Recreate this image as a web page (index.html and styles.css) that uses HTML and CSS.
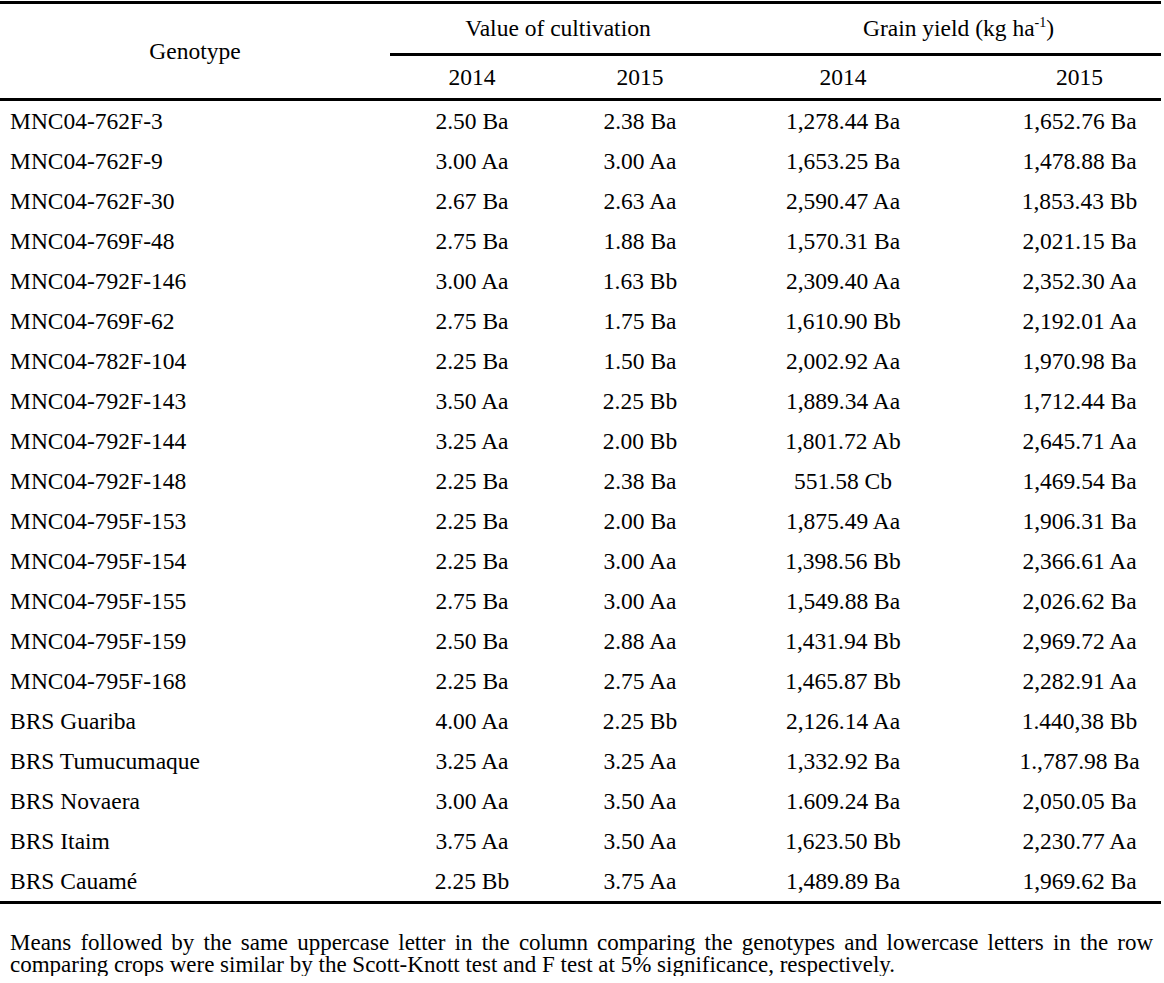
FILE: index.html
```html
<!DOCTYPE html>
<html lang="en">
<head>
<meta charset="utf-8">
<title>Table</title>
<link rel="stylesheet" href="styles.css">
</head>
<body>
<div class="page">
<table class="data">
  <colgroup>
    <col class="c-geno">
    <col class="c-v1">
    <col class="c-v2">
    <col class="c-g1">
    <col class="c-g2">
  </colgroup>
  <thead>
    <tr class="group-row">
      <th rowspan="2" class="geno-head">Genotype</th>
      <th colspan="2" class="group">Value of cultivation</th>
      <th colspan="2" class="group group-grain">Grain yield (kg ha<sup>-1</sup>)</th>
    </tr>
    <tr class="year-row">
      <th>2014</th>
      <th>2015</th>
      <th>2014</th>
      <th class="last">2015</th>
    </tr>
  </thead>
  <tbody>
    <tr><td class="name">MNC04-762F-3</td><td>2.50 Ba</td><td>2.38 Ba</td><td>1,278.44 Ba</td><td class="last">1,652.76 Ba</td></tr>
    <tr><td class="name">MNC04-762F-9</td><td>3.00 Aa</td><td>3.00 Aa</td><td>1,653.25 Ba</td><td class="last">1,478.88 Ba</td></tr>
    <tr><td class="name">MNC04-762F-30</td><td>2.67 Ba</td><td>2.63 Aa</td><td>2,590.47 Aa</td><td class="last">1,853.43 Bb</td></tr>
    <tr><td class="name">MNC04-769F-48</td><td>2.75 Ba</td><td>1.88 Ba</td><td>1,570.31 Ba</td><td class="last">2,021.15 Ba</td></tr>
    <tr><td class="name">MNC04-792F-146</td><td>3.00 Aa</td><td>1.63 Bb</td><td>2,309.40 Aa</td><td class="last">2,352.30 Aa</td></tr>
    <tr><td class="name">MNC04-769F-62</td><td>2.75 Ba</td><td>1.75 Ba</td><td>1,610.90 Bb</td><td class="last">2,192.01 Aa</td></tr>
    <tr><td class="name">MNC04-782F-104</td><td>2.25 Ba</td><td>1.50 Ba</td><td>2,002.92 Aa</td><td class="last">1,970.98 Ba</td></tr>
    <tr><td class="name">MNC04-792F-143</td><td>3.50 Aa</td><td>2.25 Bb</td><td>1,889.34 Aa</td><td class="last">1,712.44 Ba</td></tr>
    <tr><td class="name">MNC04-792F-144</td><td>3.25 Aa</td><td>2.00 Bb</td><td>1,801.72 Ab</td><td class="last">2,645.71 Aa</td></tr>
    <tr><td class="name">MNC04-792F-148</td><td>2.25 Ba</td><td>2.38 Ba</td><td>551.58 Cb</td><td class="last">1,469.54 Ba</td></tr>
    <tr><td class="name">MNC04-795F-153</td><td>2.25 Ba</td><td>2.00 Ba</td><td>1,875.49 Aa</td><td class="last">1,906.31 Ba</td></tr>
    <tr><td class="name">MNC04-795F-154</td><td>2.25 Ba</td><td>3.00 Aa</td><td>1,398.56 Bb</td><td class="last">2,366.61 Aa</td></tr>
    <tr><td class="name">MNC04-795F-155</td><td>2.75 Ba</td><td>3.00 Aa</td><td>1,549.88 Ba</td><td class="last">2,026.62 Ba</td></tr>
    <tr><td class="name">MNC04-795F-159</td><td>2.50 Ba</td><td>2.88 Aa</td><td>1,431.94 Bb</td><td class="last">2,969.72 Aa</td></tr>
    <tr><td class="name">MNC04-795F-168</td><td>2.25 Ba</td><td>2.75 Aa</td><td>1,465.87 Bb</td><td class="last">2,282.91 Aa</td></tr>
    <tr><td class="name">BRS Guariba</td><td>4.00 Aa</td><td>2.25 Bb</td><td>2,126.14 Aa</td><td class="last">1.440,38 Bb</td></tr>
    <tr><td class="name">BRS Tumucumaque</td><td>3.25 Aa</td><td>3.25 Aa</td><td>1,332.92 Ba</td><td class="last">1.,787.98 Ba</td></tr>
    <tr><td class="name">BRS Novaera</td><td>3.00 Aa</td><td>3.50 Aa</td><td>1.609.24 Ba</td><td class="last">2,050.05 Ba</td></tr>
    <tr><td class="name">BRS Itaim</td><td>3.75 Aa</td><td>3.50 Aa</td><td>1,623.50 Bb</td><td class="last">2,230.77 Aa</td></tr>
    <tr><td class="name">BRS Cauamé</td><td>2.25 Bb</td><td>3.75 Aa</td><td>1,489.89 Ba</td><td class="last">1,969.62 Ba</td></tr>
  </tbody>
</table>
<p class="note">Means followed by the same uppercase letter in the column comparing the genotypes and lowercase letters in the row comparing crops were similar by the Scott-Knott test and F test at 5% significance, respectively.</p>
</div>
</body>
</html>
```

FILE: styles.css
```css
html, body {
  margin: 0;
  padding: 0;
  background: #ffffff;
}

.page {
  width: 1161px;
  padding-top: 1px;
  font-family: "Liberation Serif", "Times New Roman", serif;
  color: #000000;
}

.data {
  width: 1161px;
  table-layout: fixed;
  border-collapse: collapse;
  font-size: 23.5px;
  line-height: 26px;
}

.c-geno { width: 390px; }
.c-v1 { width: 164px; }
.c-v2 { width: 172px; }
.c-g1 { width: 234px; }
.c-g2 { width: 201px; }

.data th {
  font-weight: normal;
  text-align: center;
  padding: 0;
}

.group-row th {
  border-top: 3px solid #000;
  height: 47px;
  vertical-align: middle;
}

.group-row th.group {
  border-bottom: 3px solid #000;
  padding-bottom: 2px;
}

.group-row th.group-grain {
  padding-left: 30px;
}

.geno-head {
  border-bottom: 3px solid #000;
}

.year-row th {
  height: 42px;
  border-bottom: 3px solid #000;
  vertical-align: middle;
}

.data sup {
  font-size: 14px;
  line-height: 0;
  vertical-align: 9px;
}

.data td {
  height: 40px;
  padding: 0;
  text-align: center;
  vertical-align: middle;
}

.data td.name {
  text-align: left;
  padding-left: 10px;
}

.data .last {
  padding-left: 38px;
}

.data tbody tr:last-child td {
  border-bottom: 3px solid #000;
}

.note {
  margin: 28px 8px 0 10px;
  font-size: 23px;
  line-height: 22px;
  text-align: justify;
}
```
